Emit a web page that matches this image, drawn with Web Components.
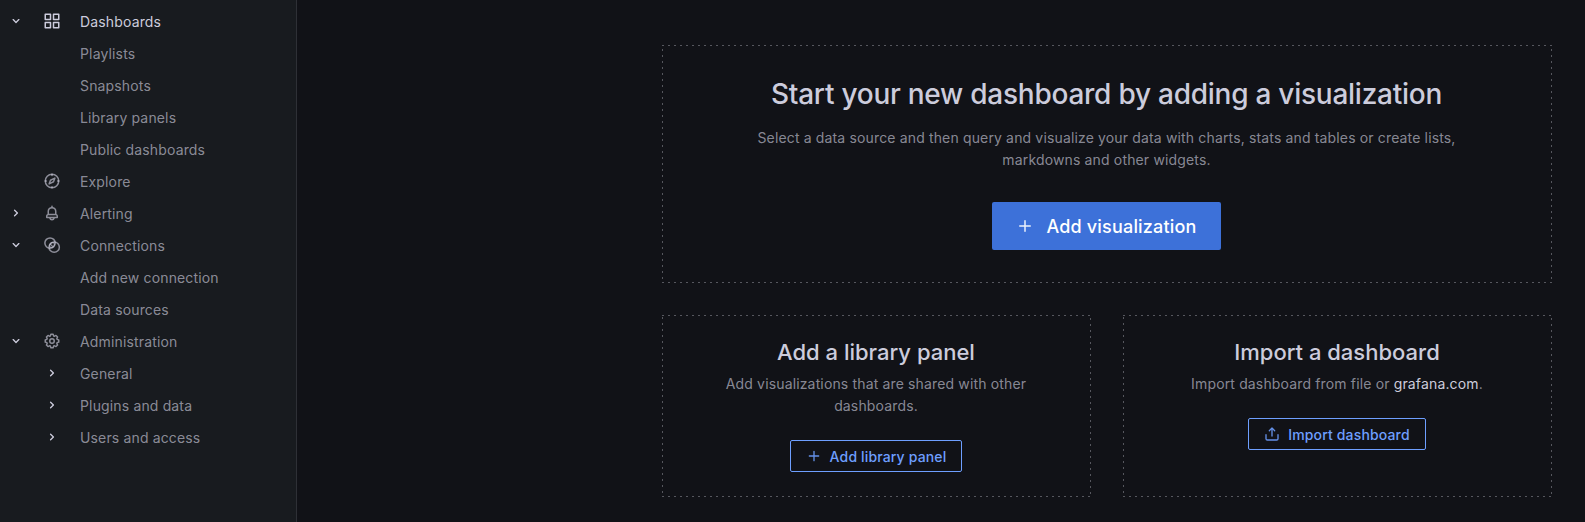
<!DOCTYPE html>
<html lang="en">
<head>
<meta charset="utf-8">
<title>New dashboard</title>
<style>
html,body{margin:0;height:100%;background:#111217;overflow:hidden}
body{font:400 14px/22px Inter,"Liberation Sans",sans-serif;letter-spacing:.15px;color:#ccccdc}
</style>
</head>
<body>
<dash-app>
  <nav-menu slot="nav">
    <nav-item toggle="down" icon="apps" active>Dashboards</nav-item>
    <nav-item>Playlists</nav-item>
    <nav-item>Snapshots</nav-item>
    <nav-item>Library panels</nav-item>
    <nav-item>Public dashboards</nav-item>
    <nav-item icon="compass">Explore</nav-item>
    <nav-item toggle="right" icon="bell">Alerting</nav-item>
    <nav-item toggle="down" icon="connections">Connections</nav-item>
    <nav-item>Add new connection</nav-item>
    <nav-item>Data sources</nav-item>
    <nav-item toggle="down" icon="cog">Administration</nav-item>
    <nav-item subtoggle="right">General</nav-item>
    <nav-item subtoggle="right">Plugins and data</nav-item>
    <nav-item subtoggle="right">Users and access</nav-item>
  </nav-menu>
  <empty-card class="hero" size="lg">
    <span slot="title">Start your new dashboard by adding a visualization</span>
    Select a data source and then query and visualize your data with charts, stats and tables or create lists, markdowns and other widgets.
    <action-button slot="action" icon="plus" size="lg">Add visualization</action-button>
  </empty-card>
  <empty-card>
    <span slot="title">Add a library panel</span>
    Add visualizations that are shared with other dashboards.
    <action-button slot="action" icon="plus">Add library panel</action-button>
  </empty-card>
  <empty-card>
    <span slot="title">Import a dashboard</span>
    Import dashboard from file or <text-link>grafana.com</text-link>.
    <action-button slot="action" icon="upload">Import dashboard</action-button>
  </empty-card>
</dash-app>
<script>
const define = (name, html, setup) => {
  const t = document.createElement('template');
  t.innerHTML = html;
  customElements.define(name, class extends HTMLElement {
    connectedCallback() {
      if (this.shadowRoot) return;
      this.attachShadow({mode: 'open'}).append(t.content.cloneNode(true));
      if (setup) setup(this, this.shadowRoot);
    }
  });
};

const line = 'fill="none" stroke="currentColor" stroke-width="2" stroke-linecap="round" stroke-linejoin="round"';
const ICONS = {
  down: '<path fill="currentColor" d="M17,9.17a1,1,0,0,0-1.41,0L12,12.71,8.46,9.17a1,1,0,0,0-1.41,0,1,1,0,0,0,0,1.42l4.24,4.24a1,1,0,0,0,1.42,0L17,10.59A1,1,0,0,0,17,9.17Z"/>',
  right: '<path fill="currentColor" d="M14.83,11.29,10.59,7.05a1,1,0,0,0-1.42,0,1,1,0,0,0,0,1.41L12.71,12,9.17,15.54a1,1,0,0,0,0,1.41,1,1,0,0,0,.71.29,1,1,0,0,0,.71-.29l4.24-4.24A1,1,0,0,0,14.83,11.29Z"/>',
  apps: '<path fill="currentColor" d="M10,13H3a1,1,0,0,0-1,1v7a1,1,0,0,0,1,1h7a1,1,0,0,0,1-1V14A1,1,0,0,0,10,13ZM9,20H4V15H9ZM21,2H14a1,1,0,0,0-1,1v7a1,1,0,0,0,1,1h7a1,1,0,0,0,1-1V3A1,1,0,0,0,21,2ZM20,9H15V4h5Zm1,4H14a1,1,0,0,0-1,1v7a1,1,0,0,0,1,1h7a1,1,0,0,0,1-1V14A1,1,0,0,0,21,13Zm-1,7H15V15h5ZM10,2H3A1,1,0,0,0,2,3v7a1,1,0,0,0,1,1h7a1,1,0,0,0,1-1V3A1,1,0,0,0,10,2ZM9,9H4V4H9Z"/>',
  compass: `<g ${line}><circle cx="12" cy="12" r="9"/><path d="M15.8 8.2 14 13l-5.8 2.8L10 11z"/><path d="M12 3v1.5M12 19.5V21M3 12h1.5M19.5 12H21"/></g>`,
  bell: '<path fill="currentColor" d="M18,13.18V10a6,6,0,0,0-5-5.91V3a1,1,0,0,0-2,0V4.09A6,6,0,0,0,6,10v3.18A3,3,0,0,0,4,16v2a1,1,0,0,0,1,1H8.14a4,4,0,0,0,7.72,0H19a1,1,0,0,0,1-1V16A3,3,0,0,0,18,13.18ZM8,10a4,4,0,0,1,8,0v3H8Zm4,10a2,2,0,0,1-1.72-1h3.44A2,2,0,0,1,12,20Zm6-3H6V16a1,1,0,0,1,1-1H17a1,1,0,0,1,1,1Z"/>',
  connections: `<g ${line}><circle cx="9.4" cy="9.4" r="6.9"/><circle cx="14.9" cy="14.9" r="6.9"/><path d="M9.1 14.2a3.9 3.9 0 0 1 5.1-5.1M14.9 9.8a3.9 3.9 0 0 1-5.1 5.1M10.5 11.5l2 2" stroke-width="1.5"/></g>`,
  cog: '<path fill="currentColor" d="M21.32,9.55l-1.89-.63.89-1.78A1,1,0,0,0,20.13,6L18,3.87a1,1,0,0,0-1.15-.19l-1.78.89-.63-1.89A1,1,0,0,0,13.5,2h-3a1,1,0,0,0-.95.68L8.92,4.57,7.14,3.68A1,1,0,0,0,6,3.87L3.87,6a1,1,0,0,0-.19,1.15l.89,1.78-1.89.63A1,1,0,0,0,2,10.5v3a1,1,0,0,0,.68.95l1.89.63-.89,1.78A1,1,0,0,0,3.87,18L6,20.13a1,1,0,0,0,1.15.19l1.78-.89.63,1.89a1,1,0,0,0,.95.68h3a1,1,0,0,0,.95-.68l.63-1.89,1.78.89A1,1,0,0,0,18,20.13L20.13,18a1,1,0,0,0,.19-1.15l-.89-1.78,1.89-.63A1,1,0,0,0,22,13.5v-3A1,1,0,0,0,21.32,9.55ZM20,12.78l-1.2.4A2,2,0,0,0,17.64,16l.57,1.14-1.1,1.1L16,17.64a2,2,0,0,0-2.79,1.16l-.4,1.2H11.22l-.4-1.2A2,2,0,0,0,8,17.64l-1.14.57-1.1-1.1L6.36,16A2,2,0,0,0,5.2,13.18L4,12.78V11.22l1.2-.4A2,2,0,0,0,6.36,8L5.79,6.89l1.1-1.1L8,6.36A2,2,0,0,0,10.82,5.2l.4-1.2h1.56l.4,1.2A2,2,0,0,0,16,6.36l1.14-.57,1.1,1.1L17.64,8a2,2,0,0,0,1.16,2.79l1.2.4ZM12,8a4,4,0,1,0,4,4A4,4,0,0,0,12,8Zm0,6a2,2,0,1,1,2-2A2,2,0,0,1,12,14Z"/>',
  plus: '<path fill="currentColor" d="M19,11H13V5a1,1,0,0,0-2,0v6H5a1,1,0,0,0,0,2h6v6a1,1,0,0,0,2,0V13h6a1,1,0,0,0,0-2Z"/>',
  upload: '<path fill="currentColor" d="M8.71,7.71,11,5.41V15a1,1,0,0,0,2,0V5.41l2.29,2.3a1,1,0,0,0,1.42,0,1,1,0,0,0,0-1.42l-4-4a1,1,0,0,0-.33-.21,1,1,0,0,0-.76,0,1,1,0,0,0-.33.21l-4,4A1,1,0,1,0,8.71,7.71ZM21,12a1,1,0,0,0-1,1v6a1,1,0,0,1-1,1H5a1,1,0,0,1-1-1V13a1,1,0,0,0-2,0v6a3,3,0,0,0,3,3H19a3,3,0,0,0,3-3V13A1,1,0,0,0,21,12Z"/>'
};

define('ui-icon', `<style>:host{display:block;width:16px;height:16px;flex:none}svg{display:block;width:100%;height:100%}</style><svg viewBox="0 0 24 24"></svg>`,
  (el, root) => { root.querySelector('svg').innerHTML = ICONS[el.getAttribute('name')] || ''; });

define('text-link', `<style>:host{color:#ccccdc}</style><slot></slot>`);

define('nav-item', `<style>
:host{display:grid;grid-template-columns:32px 40px 1fr;align-items:center;height:32px;color:rgba(204,204,220,.65)}
:host([active]){color:#ccccdc}
.t,.i{display:flex;justify-content:center}
.t ui-icon,.i .sub{color:#ccccdc}
.label{padding-left:8px;padding-top:1px}
</style><div class="t"></div><div class="i"></div><div class="label"><slot></slot></div>`,
  (el, root) => {
    const add = (attr, sel, cls) => {
      if (!el.hasAttribute(attr)) return;
      const i = document.createElement('ui-icon');
      i.setAttribute('name', el.getAttribute(attr));
      i.className = cls;
      root.querySelector(sel).append(i);
    };
    add('toggle', '.t', '');
    add('icon', '.i', 'main');
    add('subtoggle', '.i', 'sub');
    const m = root.querySelector('.main');
    if (m) m.style.cssText = 'width:18px;height:18px';
  });

define('nav-menu', `<style>:host{display:block;box-sizing:border-box;width:297px;height:100%;padding-top:5px;background:#181b1f;border-right:1px solid #2e3036}</style><slot></slot>`);

define('action-button', `<style>
:host{display:inline-flex;box-sizing:border-box;align-items:center;height:32px;padding:0 15px;gap:8px;border:1px solid #6e9fff;border-radius:2px;color:#6e9fff;font-weight:500;white-space:nowrap}
:host([size=lg]){height:48px;padding:0 24px;gap:12px;border:0;background:#3d71d9;color:#fff;font-size:18px;letter-spacing:.19px}
:host([size=lg]) ui-icon{width:18px;height:18px}
span{padding-top:2px}
ui-icon{opacity:.9}
</style><ui-icon></ui-icon><span><slot></slot></span>`,
  (el, root) => {
    const i = root.querySelector('ui-icon'), n = document.createElement('ui-icon');
    n.setAttribute('name', el.getAttribute('icon'));
    i.replaceWith(n);
  });

define('empty-card', `<style>
:host{display:flex;position:relative;box-sizing:border-box;flex-direction:column;align-items:center;padding:23px 25px 24px 24px;text-align:center}
:host([size=lg]){padding:32px 33px 32px 32px}
.frame{position:absolute;inset:0;width:100%;height:100%}
.frame rect{fill:none;stroke:#56575e;stroke-width:2;stroke-dasharray:2 4}
h2{margin:0 0 7px;font-size:22px;line-height:28px;font-weight:500;letter-spacing:0}
p{margin:0;max-width:320px;color:rgba(204,204,220,.65)}
.action{display:flex;margin-top:23px}
:host([size=lg]) h2{font-size:28px;line-height:34px;margin-bottom:16px;letter-spacing:-.25px}
:host([size=lg]) p{max-width:706px}
:host([size=lg]) .action{margin-top:31px}
</style><svg class="frame"><rect width="100%" height="100%"/></svg><h2><slot name="title"></slot></h2><p><slot></slot></p><div class="action"><slot name="action"></slot></div>`);

define('dash-app', `<style>
:host{display:grid;grid-template-columns:297px 1fr;height:100vh}
main{display:grid;grid-template-columns:429px 429px;grid-template-rows:238px 182px;gap:32px;justify-content:end;align-content:start;padding:45px 33px 0 0}
::slotted(.hero){grid-column:1 / 3}
</style><slot name="nav"></slot><main><slot></slot></main>`);
</script>
</body>
</html>
